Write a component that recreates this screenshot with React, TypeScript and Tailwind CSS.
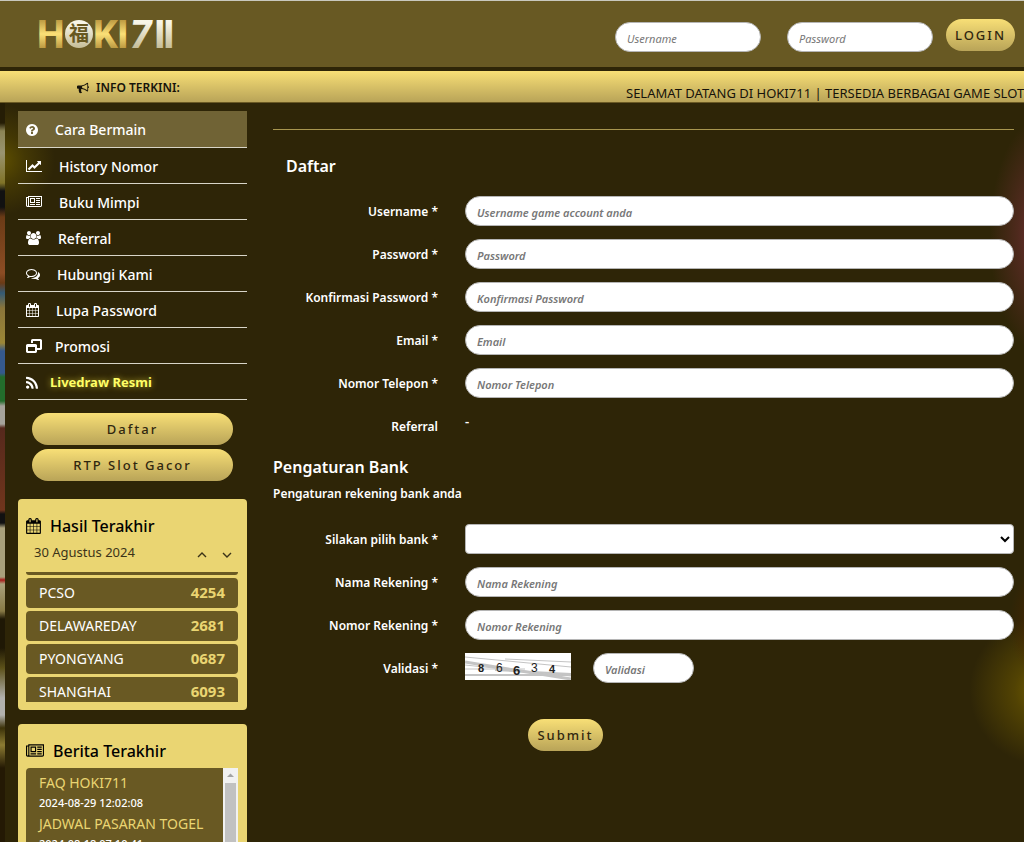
import type { ReactNode } from "react";

type IconProps = { d: string; className?: string; viewBox?: string };

const ICONS = {
  question:
    "M1024 1376v-192q0-14-9-23t-23-9h-192q-14 0-23 9t-9 23v192q0 14 9 23t23 9h192q14 0 23-9t9-23zm256-672q0-88-55.5-163t-138.5-116-170-41q-243 0-371 213-15 24 8 42l132 100q7 6 19 6 16 0 25-12 53-68 86-92 34-24 86-24 48 0 85.5 26t37.5 59q0 38-20 61t-68 45q-63 28-115.5 86.5t-52.5 125.5v36q0 14 9 23t23 9h192q14 0 23-9t9-23q0-19 21.5-49.5t54.5-49.5q32-18 49-28.5t46-35 44.5-48 28-60.5 12.5-81zm384 192q0 209-103 385.5t-279.5 279.5-385.5 103-385.5-103-279.5-279.5-103-385.5 103-385.5 279.5-279.5 385.5-103 385.5 103 279.5 279.5 103 385.5z",
  chart:
    "M2048 1536v128h-2048v-1536h128v1408h1920zm-128-1248v435q0 21-19.5 29.5t-35.5-7.5l-121-121-633 633q-10 10-23 10t-23-10l-233-233-416 416-192-192 585-585q10-10 23-10t23 10l233 233 464-464-121-121q-16-16-7.5-35.5t29.5-19.5h435q14 0 23 9t9 23z",
  newspaper:
    "M1024 512h-384v384h384v-384zm128 640v128h-640v-128h640zm0-768v640h-640v-640h640zm640 768v128h-512v-128h512zm0-256v128h-512v-128h512zm0-256v128h-512v-128h512zm0-256v128h-512v-128h512zm-1536 960v-960h-128v960q0 26 19 45t45 19 45-19 19-45zm1664 0v-1088h-1536v1088q0 33-11 64h1483q26 0 45-19t19-45zm128-1216v1216q0 80-56 136t-136 56h-1664q-80 0-136-56t-56-136v-1088h256v-128h1792z",
  users:
    "M529 896q-162 5-265 128h-134q-82 0-138-40.5t-56-118.5q0-353 124-353 6 0 43.5 21t97.5 42.5 119 21.5q67 0 133-23-5 37-5 66 0 139 81 256zm1071 637q0 120-73 189.5t-194 69.5h-874q-121 0-194-69.5t-73-189.5q0-53 3.5-103.5t14-109 26.5-108.5 43-97.5 62-81 85.5-53.5 111.5-20q10 0 43 21.5t73 48 107 48 135 21.5 135-21.5 107-48 73-48 43-21.5q61 0 111.5 20t85.5 53.5 62 81 43 97.5 26.5 108.5 14 109 3.5 103.5zm-1024-1277q0 106-75 181t-181 75-181-75-75-181 75-181 181-75 181 75 75 181zm704 384q0 159-112.5 271.5t-271.5 112.5-271.5-112.5-112.5-271.5 112.5-271.5 271.5-112.5 271.5 112.5 112.5 271.5zm576 225q0 78-56 118.5t-138 40.5h-134q-103-123-265-128 81-117 81-256 0-29-5-66 66 23 133 23 59 0 119-21.5t97.5-42.5 43.5-21q124 0 124 353zm-128-609q0 106-75 181t-181 75-181-75-75-181 75-181 181-75 181 75 75 181z",
  comments:
    "M704 384q-153 0-286 52t-211.5 141-78.5 191q0 82 53 158t149 132l97 56-35 84q34-20 62-39l44-31 53 10q78 14 153 14 153 0 286-52t211.5-141 78.5-191-78.5-191-211.5-141-286-52zm0-128q191 0 353.5 68.5t256.5 186.5 94 257-94 257-256.5 186.5-353.5 68.5q-86 0-176-16-124 88-278 128-36 9-86 16h-3q-11 0-20.5-8t-11.5-21q-1-3-1-6.5t.5-6.5 2-6l2.5-5 3.5-5.5 4-5 4.5-5 4-4.5q5-6 23-25t26-29.5 22.5-29 25-38.5 20.5-44q-124-72-195-177t-71-224q0-139 94-257t256.5-186.5 353.5-68.5zm822 1169q10 24 20.5 44t25 38.5 22.5 29 26 29.5 23 25q1 1 4 4.5t4.5 5 4 5 3.5 5.5l2.5 5 2 6 .5 6.5-1 6.5q-3 14-13 22t-22 7q-50-7-86-16-154-40-278-128-90 16-176 16-271 0-472-132 58 4 88 4 161 0 309-45t264-129q125-92 192-212t67-254q0-77-23-152 129 71 204 178t75 230q0 120-71 224.5t-195 176.5z",
  calendar:
    "M192 1664h288v-288h-288v288zm352 0h320v-288h-320v288zm-352-352h288v-320h-288v320zm352 0h320v-320h-320v320zm-352-384h288v-288h-288v288zm736 736h320v-288h-320v288zm-384-736h320v-288h-320v288zm768 736h288v-288h-288v288zm-384-352h320v-320h-320v320zm-352-864v-288q0-13-9.5-22.5t-22.5-9.5h-64q-13 0-22.5 9.5t-9.5 22.5v288q0 13 9.5 22.5t22.5 9.5h64q13 0 22.5-9.5t9.5-22.5zm736 864h288v-320h-288v320zm-384-384h320v-288h-320v288zm384 0h288v-288h-288v288zm32-480v-288q0-13-9.5-22.5t-22.5-9.5h-64q-13 0-22.5 9.5t-9.5 22.5v288q0 13 9.5 22.5t22.5 9.5h64q13 0 22.5-9.5t9.5-22.5zm384-64v1280q0 52-38 90t-90 38h-1408q-52 0-90-38t-38-90v-1280q0-52 38-90t90-38h128v-96q0-66 47-113t113-47h64q66 0 113 47t47 113v96h384v-96q0-66 47-113t113-47h64q66 0 113 47t47 113v96h128q52 0 90 38t38 90z",
  restore:
    "M256 1536h896v-512h-896v512zM1408 1152h384v-896h-896v256h-256v-320q0-80 56-136t136-56h1024q80 0 136 56t56 136v1024q0 80-56 136t-136 56h-448v-256zM192 640h1024q80 0 136 56t56 136v768q0 80-56 136t-136 56h-1024q-80 0-136-56t-56-136v-768q0-80 56-136t136-56z",
  rss: "M576 1344q0 80-56 136t-136 56-136-56-56-136 56-136 136-56 136 56 56 136zm512 123q2 28-17 48-18 21-47 21h-135q-25 0-43-16.5t-20-41.5q-22-229-184.5-391.5t-391.5-184.5q-25-2-41.5-20t-16.5-43v-135q0-29 21-47 17-17 43-17h5q160 13 306 80.5t259 181.5q114 113 181.5 259t80.5 306zm512 2q2 27-18 47-18 20-46 20h-143q-26 0-44.5-17.5t-19.5-42.5q-12-215-101-408.5t-231.5-336-336-231.5-408.5-102q-25-1-42.5-19.5t-17.5-43.5v-143q0-28 20-46 18-18 44-18h3q262 13 501.5 120t425.5 294q187 186 294 425.5t120 501.5z",
  bullhorn:
    "M1664 640q53 0 90.5 37.5t37.5 90.5-37.5 90.5-90.5 37.5v384q0 52-38 90t-90 38q-417-347-812-380-58 19-91 66t-31 100.5 40 92.5q-20 33-23 65.5t6 58 33.5 55 48 50 61.5 50.5q-29 58-111.5 83t-168.5 11.5-132-55.5q-7-23-29.5-87.5t-32-94.5-23-89-15-101 3.5-98.5 22-110.5h-122q-66 0-113-47t-47-113v-192q0-66 47-113t113-47h480q435 0 896-384 52 0 90 38t38 90v384zm-128 604v-954q-394 302-768 343v270q377 42 768 341z",
};

const menu = [
  { label: "Cara Bermain", d: ICONS.question, viewBox: "128 0 1536 1792", icon: "w-3", gap: "gap-[17px]" },
  { label: "History Nomor", d: ICONS.chart, viewBox: "0 0 2048 1792", icon: "w-4", gap: "gap-[17px]" },
  { label: "Buku Mimpi", d: ICONS.newspaper, viewBox: "0 0 2048 1792", icon: "w-4", gap: "gap-[17px]" },
  { label: "Referral", d: ICONS.users, viewBox: "-64 0 1920 1792", icon: "w-[15px]", gap: "gap-[17px]" },
  { label: "Hubungi Kami", d: ICONS.comments, viewBox: "0 0 1792 1792", icon: "w-[14px]", gap: "gap-[17px]" },
  { label: "Lupa Password", d: ICONS.calendar, viewBox: "64 0 1664 1792", icon: "w-[13px]", gap: "gap-[17px]" },
  { label: "Promosi", d: ICONS.restore, viewBox: "0 0 2048 1792", icon: "w-4", gap: "gap-[13px]" },
];

const results = [
  { pasaran: "PCSO", nomor: "4254" },
  { pasaran: "DELAWAREDAY", nomor: "2681" },
  { pasaran: "PYONGYANG", nomor: "0687" },
  { pasaran: "SHANGHAI", nomor: "6093" },
];

const news = [
  { title: "FAQ HOKI711", date: "2024-08-29 12:02:08" },
  { title: "JADWAL PASARAN TOGEL", date: "2024-08-18 07:10:41" },
];

const goldButton =
  "h-8 rounded-full bg-gradient-to-b from-[#f8df76] to-[#b9a458] pt-0.5 text-[13px] font-medium tracking-[2px] text-[#30270f]";
const inputClass =
  "h-[30px] rounded-[15px] border border-[#b5b5b5] bg-white px-[11px] pt-0.5 text-[11px] italic text-gray-700 placeholder:text-[#777] outline-none";

function Icon({ d, className, viewBox = "0 0 1792 1792" }: IconProps) {
  return (
    <svg viewBox={viewBox} className={className} fill="currentColor" aria-hidden="true">
      <path fillRule={d === ICONS.restore ? "evenodd" : "nonzero"} d={d} />
    </svg>
  );
}

function Logo() {
  return (
    <svg width="148" height="60" viewBox="-6 -14 148 60" role="img" aria-label="HOKI711">
      <defs>
        <linearGradient id="gold" gradientUnits="userSpaceOnUse" x1="0" y1="2" x2="0" y2="30">
          <stop offset="0" stopColor="#bd9a42" />
          <stop offset="0.5" stopColor="#fbe077" />
          <stop offset="1" stopColor="#bd9a42" />
        </linearGradient>
        <linearGradient id="silver" gradientUnits="userSpaceOnUse" x1="0" y1="2" x2="0" y2="30">
          <stop offset="0.1" stopColor="#f7f5e8" />
          <stop offset="1" stopColor="#c5bd98" />
        </linearGradient>
      </defs>
      <g fontFamily="Roboto, sans-serif" fontWeight="800" fontSize="39">
        <text x="-1" y="30" fill="url(#gold)">H</text>
        <text x="55" y="30" fill="url(#gold)">K</text>
        <text x="79" y="30" fill="url(#gold)">I</text>
        <text x="92" y="30" fontStyle="italic" fill="url(#silver)">7</text>
        <text x="116" y="30" fill="url(#silver)">I</text>
        <text x="125" y="30" fill="url(#silver)">I</text>
      </g>
      <circle cx="41" cy="16" r="14" fill="url(#silver)" />
      <text x="31" y="23" fontFamily="'Noto Sans CJK SC', sans-serif" fontWeight="700" fontSize="20" fill="#675821">
        福
      </text>
    </svg>
  );
}

function Field({ id, label, children }: { id: string; label: string; children: ReactNode }) {
  return (
    <div className="mb-[13px] flex h-[30px] items-center gap-[27px]">
      <label htmlFor={id} className="w-[165px] shrink-0 pt-0.5 text-right text-xs font-semibold">
        {label}
      </label>
      {children}
    </div>
  );
}

function TextField({ id, label, placeholder, type = "text" }: { id: string; label: string; placeholder: string; type?: string }) {
  return (
    <Field id={id} label={label}>
      <input id={id} type={type} placeholder={placeholder} className={`${inputClass} min-w-0 flex-1 font-semibold`} />
    </Field>
  );
}

function Captcha() {
  return (
    <svg width="106" height="27" viewBox="0 0 106 27" role="img" aria-label="86634" className="shrink-0 bg-white">
      <g stroke="#c4c4c4" fill="none">
        <path d="M0 9L106 26" strokeWidth="3" />
        <path d="M0 22H106M30 17L106 21" strokeWidth="2" />
        <path d="M0 4L106 14M40 6L106 9M0 16H60M0 12L106 23" />
      </g>
      <g fontFamily="'Liberation Sans', sans-serif" fill="#222">
        <text x="13" y="19" fontSize="11" fontWeight="700">8</text>
        <text x="31" y="19" fontSize="12">6</text>
        <text x="48" y="22" fontSize="13" fontWeight="700">6</text>
        <text x="66" y="19" fontSize="12">3</text>
        <text x="84" y="20" fontSize="11" fontWeight="700">4</text>
      </g>
    </svg>
  );
}

function Sidebar() {
  return (
    <aside className="w-[229px] shrink-0">
      <nav className="text-[14px] font-medium">
        {menu.map((item, i) => (
          <a
            key={item.label}
            href="#"
            className={`flex items-center border-b border-[#d8d5c8] pl-2 pt-px ${item.gap} ${i === 0 ? "h-[37px] bg-[#706335]" : "h-9"}`}
          >
            <Icon d={item.d} viewBox={item.viewBox} className={`h-[14px] shrink-0 ${item.icon}`} />
            {item.label}
          </a>
        ))}
        <a
          href="#"
          className="flex h-9 items-center gap-3 border-b border-[#d8d5c8] pl-2 pt-[3px] text-[13px] font-bold text-[#ffff66] [text-shadow:0_0_6px_#b5a52a]"
        >
          <Icon d={ICONS.rss} viewBox="192 64 1408 1600" className="h-[14px] w-3 shrink-0 text-white" />
          Livedraw Resmi
        </a>
      </nav>

      <div className="flex flex-col gap-1 px-[14px] pb-[18px] pt-[13px]">
        <button className={goldButton}>Daftar</button>
        <button className={goldButton}>RTP Slot Gacor</button>
      </div>

      <section className="rounded bg-[#ead572] pb-2 pl-2 pr-[9px] pt-[15px] text-black">
        <h2 className="flex h-6 items-center gap-[9px] text-base font-medium">
          <Icon d={ICONS.calendar} viewBox="64 0 1664 1792" className="h-4 w-[15px]" />
          Hasil Terakhir
        </h2>
        <div className="flex h-[30px] items-center justify-between pl-2 pr-[6px] text-[13px] text-[#3b3318]">
          30 Agustus 2024
          <div className="flex gap-[15px] pt-1">
            <button aria-label="Sebelumnya">
              <svg width="10" height="6" viewBox="0 0 10 6" fill="none" stroke="currentColor" strokeWidth="1.4">
                <path d="M1 5l4-4 4 4" />
              </svg>
            </button>
            <button aria-label="Berikutnya">
              <svg width="10" height="6" viewBox="0 0 10 6" fill="none" stroke="currentColor" strokeWidth="1.4">
                <path d="M1 1l4 4 4-4" />
              </svg>
            </button>
          </div>
        </div>
        <div className="mt-1 h-[130px] overflow-hidden">
          <div className="mb-[3px] h-[3px] rounded-b bg-[#695923]" />
          {results.map((r) => (
            <div
              key={r.pasaran}
              className="mb-[3px] flex h-[30px] items-center justify-between rounded bg-[#695923] px-[13px] text-sm text-white"
            >
              {r.pasaran}
              <span className="text-[15px] font-bold text-[#ead572]">{r.nomor}</span>
            </div>
          ))}
        </div>
      </section>

      <section className="mt-[14px] rounded bg-[#ead572] pl-2 pr-[9px] pt-[15px] text-black">
        <h2 className="flex h-6 items-center gap-[9px] text-base font-medium">
          <Icon d={ICONS.newspaper} viewBox="0 0 2048 1792" className="h-4 w-[18px]" />
          Berita Terakhir
        </h2>
        <div className="mt-[5px] flex h-[200px] rounded-l bg-[#695923]">
          <div className="min-w-0 flex-1 pl-[13px] pt-1">
            {news.map((n) => (
              <article key={n.title} className="h-[41px]">
                <a href="#" className="block whitespace-nowrap text-sm leading-[22px] text-[#ead572]">{n.title}</a>
                <p className="text-[11px] font-medium leading-[18px] text-white">{n.date}</p>
              </article>
            ))}
          </div>
          <div className="flex w-[15px] shrink-0 flex-col items-center bg-[#f1f1f1]">
            <svg width="15" height="15" viewBox="0 0 15 15" fill="#a3a3a3" aria-hidden="true">
              <path d="M4 9l3.5-3.5L11 9z" />
            </svg>
            <div className="w-[11px] flex-1 bg-[#c1c1c1]" />
          </div>
        </div>
      </section>
    </aside>
  );
}

function RegisterForm() {
  return (
    <form className="min-w-0 flex-1 pt-[18px]" onSubmit={(e) => e.preventDefault()}>
      <hr className="border-[#a8964f]" />
      <h1 className="mb-[18px] ml-[13px] mt-6 text-base font-semibold leading-6">Daftar</h1>
      <TextField id="username" label="Username *" placeholder="Username game account anda" />
      <TextField id="password" label="Password *" placeholder="Password" type="password" />
      <TextField id="konfirmasi" label="Konfirmasi Password *" placeholder="Konfirmasi Password" type="password" />
      <TextField id="email" label="Email *" placeholder="Email" type="email" />
      <TextField id="telepon" label="Nomor Telepon *" placeholder="Nomor Telepon" type="tel" />
      <Field id="referral" label="Referral">
        <output id="referral" className="self-start text-[13px] font-semibold leading-5">-</output>
      </Field>

      <h2 className="pt-px text-base font-semibold leading-6">Pengaturan Bank</h2>
      <p className="mb-[19px] mt-1 text-xs font-semibold leading-[22px]">Pengaturan rekening bank anda</p>
      <Field id="bank" label="Silakan pilih bank *">
        <select id="bank" defaultValue="" className="h-[30px] min-w-0 flex-1 rounded-sm border border-[#b5b5b5] bg-white text-xs text-black">
          <option value="" />
        </select>
      </Field>
      <TextField id="nama" label="Nama Rekening *" placeholder="Nama Rekening" />
      <TextField id="nomor" label="Nomor Rekening *" placeholder="Nomor Rekening" />
      <Field id="validasi" label="Validasi *">
        <div className="flex items-start gap-[22px]">
          <Captcha />
          <input id="validasi" placeholder="Validasi" className={`${inputClass} w-[101px] font-semibold`} />
        </div>
      </Field>
      <button type="submit" className={`${goldButton} ml-[255px] mt-[23px] w-[75px]`}>Submit</button>
    </form>
  );
}

export default function App() {
  return (
    <div className="h-screen overflow-hidden bg-[#2e2507] bg-[radial-gradient(ellipse_35px_60px_at_102%_74%,#4a2400_0,#4a240000_100%),radial-gradient(circle_at_102%_82%,#756000_0,#75600080_30px,#75600000_75px),radial-gradient(ellipse_55px_120px_at_102%_28%,#762f38_0,#762f3870_50%,#762f3800_100%),radial-gradient(circle_at_0%_19%,#5f5000_0,#5f500070_25px,#5f500000_55px)] font-['Noto_Sans',sans-serif] text-white">
      <header className="flex h-[67px] items-center border-t border-[#c9c8bd] bg-[#685923] pl-8 pr-[9px]">
        <Logo />
        <form className="ml-auto flex items-center pt-0.5" onSubmit={(e) => e.preventDefault()}>
          <input aria-label="Username" placeholder="Username" className={`${inputClass} mr-[26px] mt-1 w-[146px]`} />
          <input aria-label="Password" type="password" placeholder="Password" className={`${inputClass} mr-[13px] mt-1 w-[146px]`} />
          <button className={`${goldButton} w-[69px]`}>LOGIN</button>
        </form>
      </header>

      <div className="mt-1 flex h-8 border-b border-[#6a5924] bg-gradient-to-b from-[#f8df76] to-[#b9a458] text-[#16130a]">
        <strong className="flex w-[626px] shrink-0 items-center gap-[7px] pl-[77px] pt-0.5 text-xs font-semibold">
          <Icon d={ICONS.bullhorn} className="size-3" />
          INFO TERKINI:
        </strong>
        <p className="self-end whitespace-nowrap text-[13px] leading-[18px]">
          SELAMAT DATANG DI HOKI711 | TERSEDIA BERBAGAI GAME SLOT
        </p>
      </div>

      <div className="flex">
        {/* sliver of the casino backdrop showing beside the page */}
        <div className="h-screen w-[5px] shrink-0 bg-[linear-gradient(#251d05_0,#251d05_20px,#8c8454_28px,#9a9470_50px,#807327_80px,#111_88px,#111_104px,#6b3b16_114px,#8c4d24_170px,#6b3b16_180px,#345b75_190px,#8a753a_205px,#9c8736_240px,#35598c_248px,#35598c_270px,#236c2b_274px,#236c2b_298px,#a5a39a_303px,#a5a39a_321px,#56291c_325px,#70351c_407px,#111_411px,#111_420px,#aaa17b_425px,#aaa17b_474px,#a71b19_477px,#aaa17b_481px,#887a45_508px,#1f1805_516px,#1f1805_545px,#5c5119_565px,#b2b1ad_595px,#b2b1ad_612px,#3c3209_625px,#8c7b32_642px,#241904_665px)]" />
        <main className="flex min-w-0 flex-1 gap-[26px] pl-[13px] pr-[10px] pt-2">
          <Sidebar />
          <RegisterForm />
        </main>
      </div>
    </div>
  );
}
